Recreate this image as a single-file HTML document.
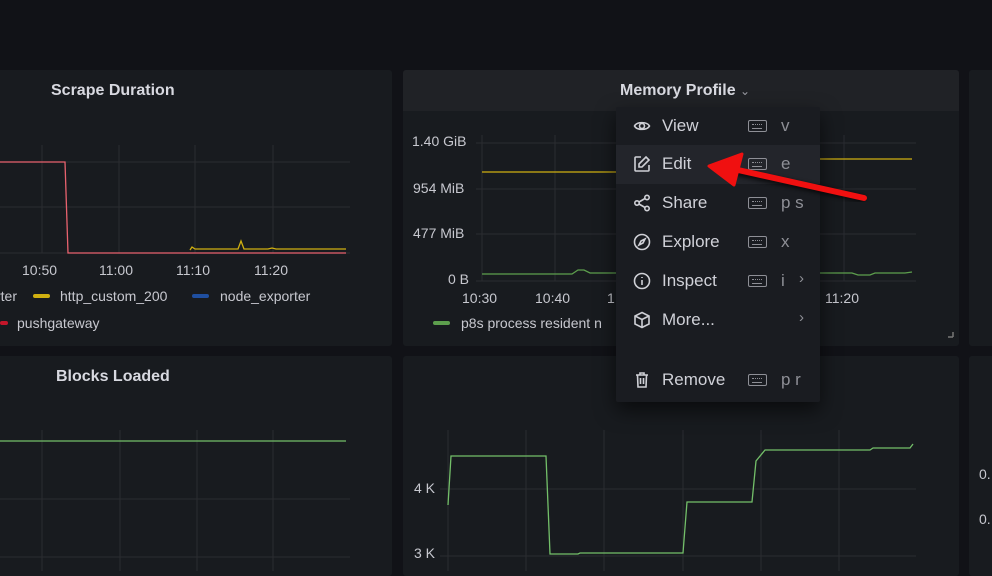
<!DOCTYPE html>
<html><head><meta charset="utf-8"><style>
*{margin:0;padding:0;box-sizing:border-box}
body{width:992px;height:571px;overflow:hidden;background:#111217;font-family:"Liberation Sans",sans-serif;position:relative;color:#ccccdc}
.p{position:absolute;background:#181b1f;border-radius:3px}
.t{position:absolute;font-size:16px;font-weight:bold;color:#d8d9e0}
.l{position:absolute;font-size:14px;color:#c7c8cf;white-space:nowrap}
.menu{position:absolute;left:616px;top:107px;width:204px;height:295px;background:#1a1c21;box-shadow:0 8px 20px rgba(0,0,0,.6);border-radius:2px}
.it{position:absolute;left:0;width:204px;height:39px;font-size:17px;color:#d0d1d8}
.it .ic{position:absolute;left:17px;top:10px}
.it .tx{position:absolute;left:46px;top:9px}
.it .kb{position:absolute;left:132px;top:13px;width:19px;height:12px;border:1.5px solid #8e8f96;border-radius:2px}
.it .kb:after{content:"";position:absolute;left:3px;top:3px;width:10px;height:3px;border-top:1px dotted #8e8f96;border-bottom:1px solid #8e8f96}
.it .sc{position:absolute;left:165px;top:9px;color:#8e8f96}
.it .ch{position:absolute;left:183px;top:8px;color:#8e8f96;font-size:15px}
</style></head><body>
<div class="p" style="left:-4px;top:70px;width:396px;height:276px"></div>
<div class="p" style="left:403px;top:70px;width:556px;height:276px"></div>
<div style="position:absolute;left:403px;top:70px;width:556px;height:41px;background:#202226;border-radius:3px 3px 0 0"></div>
<div class="p" style="left:969px;top:70px;width:30px;height:276px"></div>
<div class="p" style="left:-4px;top:356px;width:396px;height:220px"></div>
<div class="p" style="left:403px;top:356px;width:556px;height:220px"></div>
<div class="p" style="left:969px;top:356px;width:30px;height:220px"></div>

<div class="t" style="left:51px;top:82px">Scrape Duration</div>
<div class="t" style="left:56px;top:368px">Blocks Loaded</div>
<div class="t" style="left:620px;top:82px">Memory Profile <span style="font-size:12px;color:#9a9ba3;font-weight:normal">&#8964;</span></div>

<svg width="992" height="571" style="position:absolute;left:0;top:0">
<g stroke="#2a2c31" stroke-width="1">
<path d="M42 145V253M119 145V253M195 145V253M273 145V253M0 162H350M0 207H350M0 253H350"/>
<path d="M42 430V571M120 430V571M197 430V571M273 430V571M0 499H350M0 557H350"/>
<path d="M482 135V281M555 135V281M628 135V281M701 135V281M774 135V281M844 135V281M476 143H916M476 189H916M476 234H916M476 281H916"/>
<path d="M448 430V571M526 430V571M604 430V571M683 430V571M761 430V571M839 430V571M440 489H916M440 556H916"/>
</g>
<path d="M0 162H65L68 253H346" fill="none" stroke="#e8626e" stroke-width="1.3"/>
<path d="M190 250L192 247L195 249H238L241 241L244 249H268L272 248L276 249H346" fill="none" stroke="#d0b010" stroke-width="1.3"/>
<path d="M0 441H346" stroke="#73bf69" stroke-width="1.3"/>
<path d="M482 172H616M820 159H912" stroke="#d0b010" stroke-width="1.3"/>
<path d="M482 274H572L578 270L584 270L590 273H616M820 273H852L858 275H870L875 273H905L912 272" fill="none" stroke="#5d9f4d" stroke-width="1.3"/>
<path d="M448 505L451 456H546L550 554H578L580 553H683L687 502H752L756 461L765 450H870L873 448H910L913 444" fill="none" stroke="#73bf69" stroke-width="1.3"/>
<path d="M953 337H948M953 337V332" stroke="#777" stroke-width="1.5"/>
</svg>

<div class="l" style="left:22px;top:262px">10:50</div>
<div class="l" style="left:99px;top:262px">11:00</div>
<div class="l" style="left:176px;top:262px">11:10</div>
<div class="l" style="left:254px;top:262px">11:20</div>
<div class="l" style="left:-4px;top:288px">rter</div>
<div style="position:absolute;left:33px;top:294px;width:17px;height:4px;background:#d0b010;border-radius:2px"></div>
<div class="l" style="left:60px;top:288px">http_custom_200</div>
<div style="position:absolute;left:192px;top:294px;width:17px;height:4px;background:#1f4fa0;border-radius:2px"></div>
<div class="l" style="left:220px;top:288px">node_exporter</div>
<div style="position:absolute;left:0;top:321px;width:8px;height:4px;background:#c4162a;border-radius:2px"></div>
<div class="l" style="left:17px;top:315px">pushgateway</div>

<div class="l" style="left:412px;top:133px">1.40 GiB</div>
<div class="l" style="left:413px;top:180px">954 MiB</div>
<div class="l" style="left:413px;top:225px">477 MiB</div>
<div class="l" style="left:448px;top:271px">0 B</div>
<div class="l" style="left:462px;top:290px">10:30</div>
<div class="l" style="left:535px;top:290px">10:40</div>
<div class="l" style="left:607px;top:290px">1</div>
<div class="l" style="left:825px;top:290px">11:20</div>
<div style="position:absolute;left:433px;top:321px;width:17px;height:4px;background:#5d9f4d;border-radius:2px"></div>
<div class="l" style="left:461px;top:315px">p8s process resident n</div>
<div class="l" style="left:414px;top:480px">4 K</div>
<div class="l" style="left:414px;top:545px">3 K</div>
<div class="l" style="left:979px;top:466px">0.</div>
<div class="l" style="left:979px;top:511px">0.</div>

<div class="menu">
<div class="it" style="top:0"><svg class="ic" width="18" height="18" viewBox="0 0 18 18" fill="none" stroke="#cfd0d6" stroke-width="1.6"><path d="M1.5 9C4 4.5 14 4.5 16.5 9C14 13.5 4 13.5 1.5 9Z"/><circle cx="9" cy="9" r="2.5"/></svg><span class="tx">View</span><span class="kb"></span><span class="sc">v</span></div>
<div class="it" style="top:38px;background:#23252b"><svg class="ic" width="18" height="18" viewBox="0 0 18 18" fill="none" stroke="#cfd0d6" stroke-width="1.6"><path d="M8 2H3a1 1 0 0 0-1 1v12a1 1 0 0 0 1 1h12a1 1 0 0 0 1-1V10"/><path d="M13 2l3 3-7 7H6V9Z"/></svg><span class="tx">Edit</span><span class="kb"></span><span class="sc">e</span></div>
<div class="it" style="top:77px"><svg class="ic" width="18" height="18" viewBox="0 0 18 18" fill="none" stroke="#cfd0d6" stroke-width="1.6"><circle cx="4" cy="9" r="2.2"/><circle cx="14" cy="3.5" r="2.2"/><circle cx="14" cy="14.5" r="2.2"/><path d="M6 8L12 4.5M6 10L12 13.5"/></svg><span class="tx">Share</span><span class="kb"></span><span class="sc">p s</span></div>
<div class="it" style="top:116px"><svg class="ic" width="18" height="18" viewBox="0 0 18 18" fill="none" stroke="#cfd0d6" stroke-width="1.6"><circle cx="9" cy="9" r="7.5"/><path d="M12 6L10 10L6 12L8 8Z"/></svg><span class="tx">Explore</span><span class="kb"></span><span class="sc">x</span></div>
<div class="it" style="top:155px"><svg class="ic" width="18" height="18" viewBox="0 0 18 18" fill="none" stroke="#cfd0d6" stroke-width="1.6"><circle cx="9" cy="9" r="7.5"/><path d="M9 8V13M9 5V6"/></svg><span class="tx">Inspect</span><span class="kb"></span><span class="sc">i</span><span class="ch">›</span></div>
<div class="it" style="top:194px"><svg class="ic" width="18" height="18" viewBox="0 0 18 18" fill="none" stroke="#cfd0d6" stroke-width="1.6"><path d="M9 1.5L16 5V13L9 16.5L2 13V5Z"/><path d="M2 5L9 8.5L16 5M9 8.5V16.5"/></svg><span class="tx">More...</span><span class="ch">›</span></div>
<div class="it" style="top:254px"><svg class="ic" width="18" height="18" viewBox="0 0 18 18" fill="none" stroke="#cfd0d6" stroke-width="1.6"><path d="M3 4H15M7 4V2H11V4M4.5 4L5 16H13L13.5 4M7.5 7V13M10.5 7V13"/></svg><span class="tx">Remove</span><span class="kb"></span><span class="sc">p r</span></div>
</div>

<svg width="992" height="571" style="position:absolute;left:0;top:0">
<defs><filter id="s"><feGaussianBlur stdDeviation="2"/></filter></defs>
<g filter="url(#s)" opacity=".7"><path d="M864 199L735 172" stroke="#000" stroke-width="7"/></g>
<path d="M864 198L738 170" stroke="#f01010" stroke-width="6" stroke-linecap="round"/>
<path d="M709 166L742 154L734 185Z" fill="#f01010" stroke="#f01010" stroke-width="3" stroke-linejoin="round"/>
</svg>
</body></html>
